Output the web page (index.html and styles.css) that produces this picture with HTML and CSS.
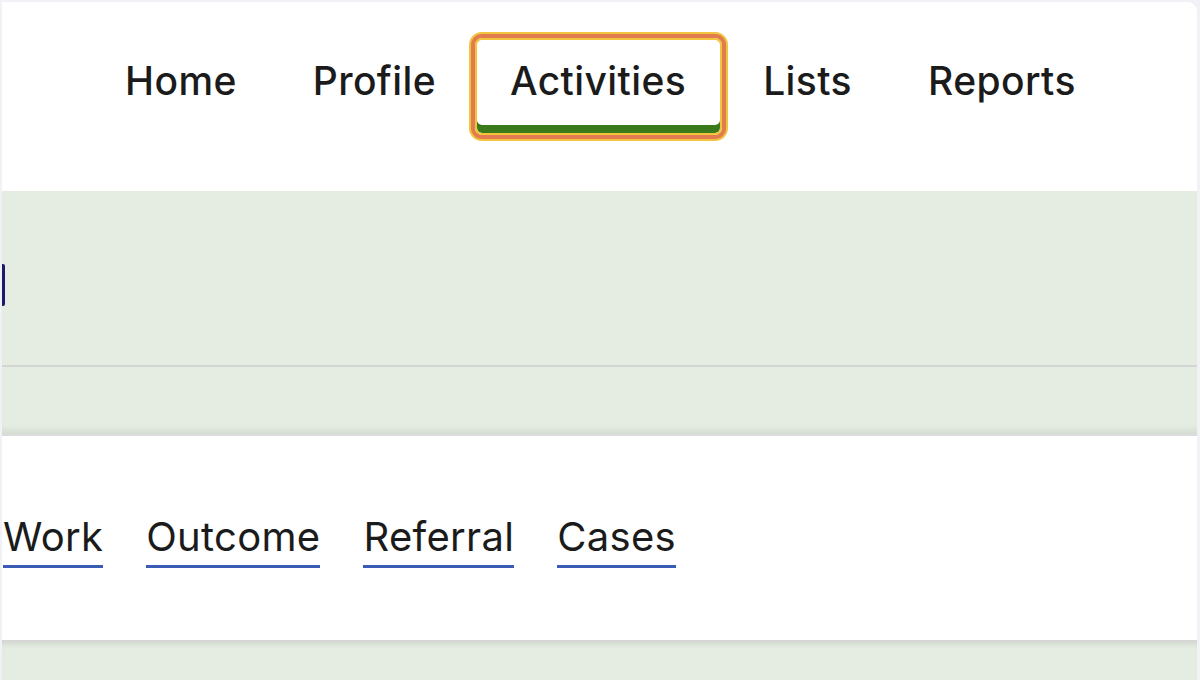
FILE: index.html
```html
<!DOCTYPE html>
<html lang="en">
<head>
<meta charset="utf-8">
<title>Activities</title>
<link rel="stylesheet" href="styles.css">
</head>
<body>
<div class="page">
  <header class="topbar">
    <nav class="tabs">
      <a class="tab">Home</a>
      <a class="tab">Profile</a>
      <a class="tab active">Activities</a>
      <a class="tab">Lists</a>
      <a class="tab">Reports</a>
    </nav>
  </header>
  <section class="band">
    <div class="band-title"><span class="glyph-tail"></span></div>
    <div class="band-sub"></div>
  </section>
  <section class="links">
    <a class="link">Work</a>
    <a class="link">Outcome</a>
    <a class="link">Referral</a>
    <a class="link">Cases</a>
  </section>
  <section class="band-bottom"></section>
</div>
</body>
</html>
```

FILE: styles.css
```css
* { box-sizing: border-box; }
html, body { margin: 0; padding: 0; }
body {
  background: #f1f1f6;
  font-family: Inter, "Noto Sans", sans-serif;
  color: #1b1b1b;
  height: 680px;
  overflow: hidden;
}
.page {
  margin: 2px 3px 0 2px;
  background: #ffffff;
  border-radius: 0 9px 0 0;
  height: 678px;
  overflow: hidden;
}
.topbar {
  height: 189px;
  padding-top: 36px;
}
.tabs {
  display: flex;
  align-items: flex-start;
  padding-left: 85px;
}
.tab {
  display: block;
  height: 97px;
  padding: 21px 38px 0;
  font-size: 39px;
  font-weight: 500;
  line-height: 44px;
  color: #1b1b1b;
  letter-spacing: 0.4px;
  white-space: nowrap;
}
.tab.active {
  padding: 19px 34px 0 33px;
  margin: 0 3px 0 1px;
  border: 2px solid #f2c33c;
  border-radius: 7px;
  box-shadow: inset 0 -8px 0 #3b7a1b, 0 0 0 4px #e07c4f, 0 0 0 6px #f2c33c;
}
.band {
  background: #e5ede3;
  height: 245px;
  display: flex;
  flex-direction: column;
  box-shadow: inset 0 -8px 6px -4px rgba(0,0,0,0.08);
  border-bottom: 2px solid #dcdcdc;
}
.band-title {
  height: 176px;
  border-bottom: 2px solid #d3d7d3;
  display: flex;
  align-items: center;
}
.glyph-tail {
  display: block;
  width: 3px;
  height: 42px;
  margin-top: 14px;
  background: #1c1b6b;
  border-radius: 0 2px 2px 0;
}
.band-sub {
  flex: 1;
}
.links {
  height: 204px;
  display: flex;
  align-items: flex-start;
  gap: 43px;
  padding: 79px 0 0 1px;
}
.link {
  display: block;
  font-size: 40px;
  font-weight: 400;
  line-height: 44px;
  color: #1b1b1b;
  padding-bottom: 6px;
  border-bottom: 3px solid #3a5cb6;
  letter-spacing: 0.3px;
  white-space: nowrap;
}
.band-bottom {
  background: #e5ede3;
  height: 60px;
  border-top: 2px solid #d6d6d6;
  box-shadow: inset 0 6px 5px -3px rgba(0,0,0,0.08);
}
```
